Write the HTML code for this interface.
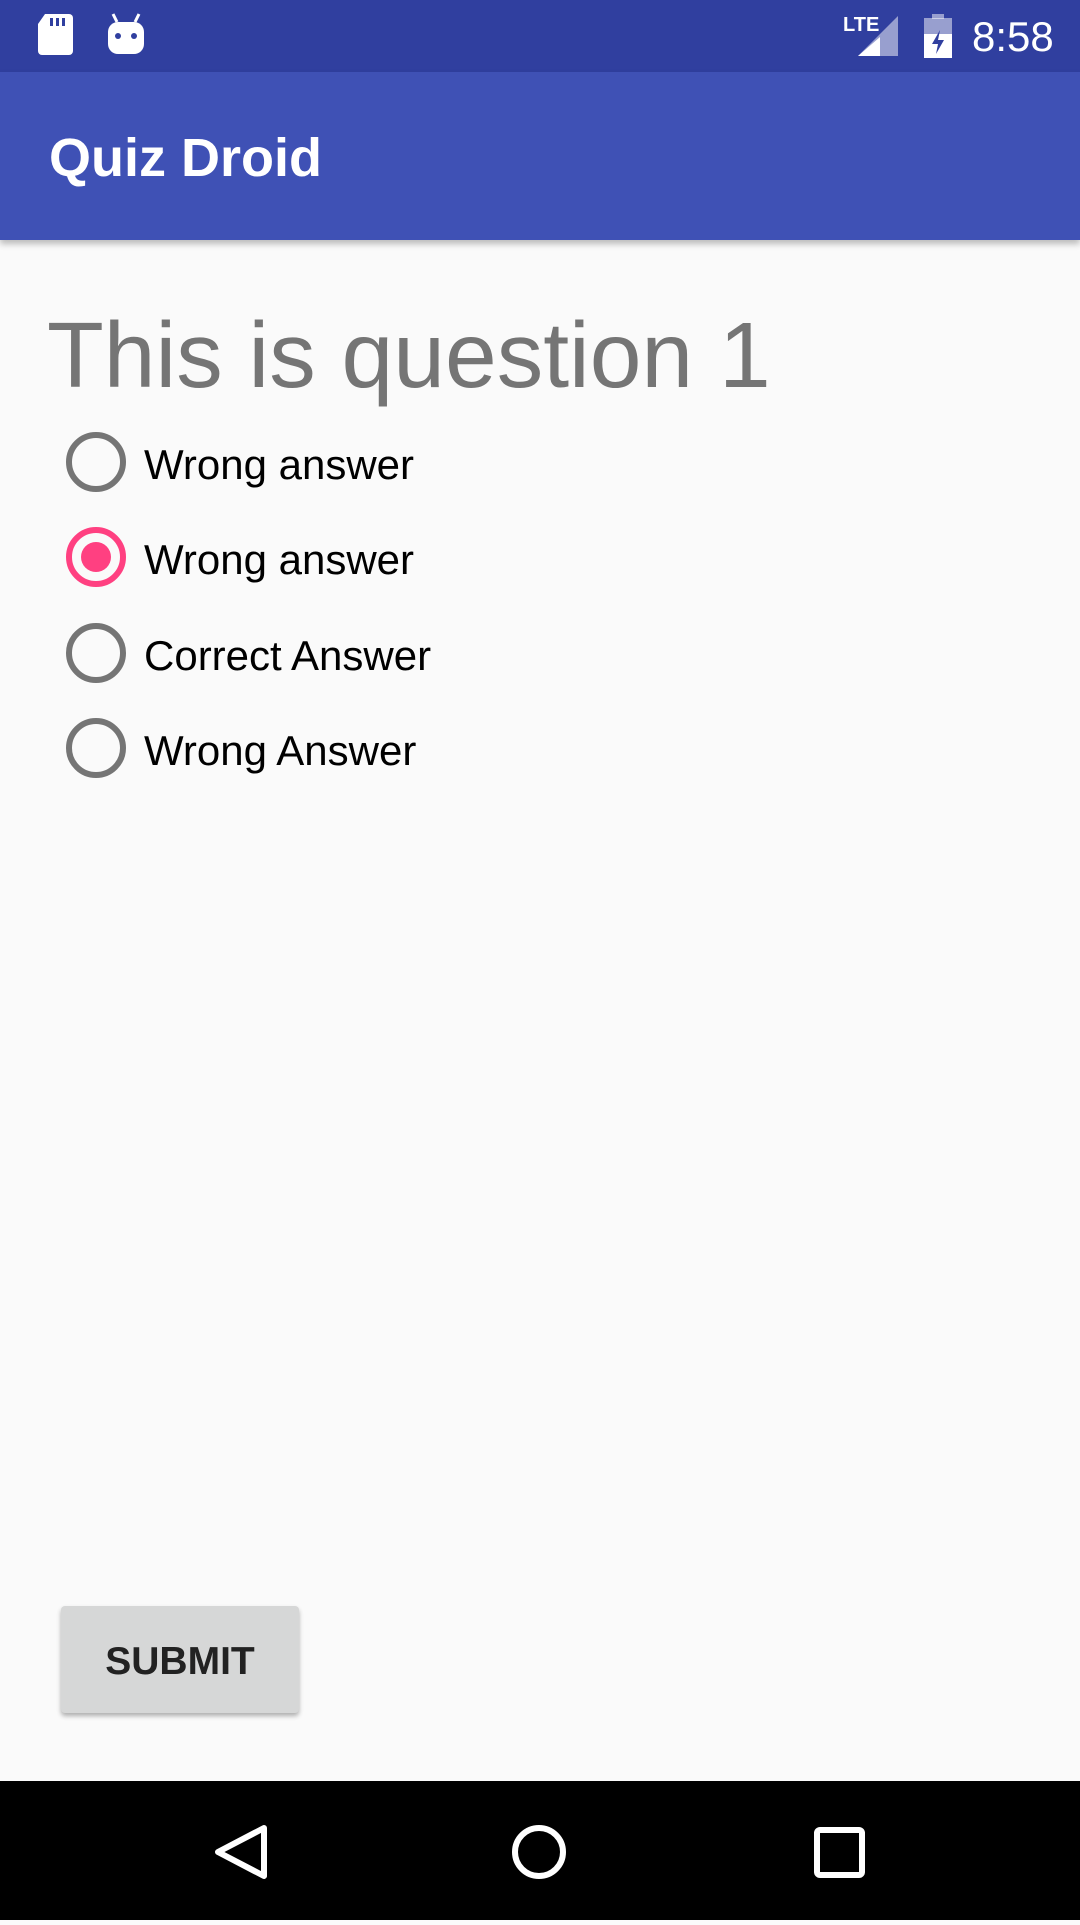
<!DOCTYPE html>
<html><head><meta charset="utf-8"><style>
*{margin:0;padding:0;box-sizing:border-box}
body{width:1080px;height:1920px;background:#FAFAFA;font-family:"Liberation Sans",sans-serif;position:relative;overflow:hidden}
.sb{position:absolute;left:0;top:0;width:1080px;height:72px;background:#303F9F}
.ab{position:absolute;left:0;top:72px;width:1080px;height:168px;background:#3F51B5;box-shadow:0 4px 6px rgba(0,0,0,.25)}
.ab span{position:absolute;left:49px;top:56px;color:#fff;font-size:54px;font-weight:bold;line-height:60px}
.q{position:absolute;left:47px;top:300px;font-size:93px;color:#757575;line-height:110px}
.r{position:absolute;left:66px;width:60px;height:60px;border:6px solid #757575;border-radius:50%}
.r.on{border-color:#FF4081}
.r.on::after{content:"";position:absolute;left:9px;top:9px;width:30px;height:30px;border-radius:50%;background:#FF4081}
.t{position:absolute;left:144px;font-size:42px;color:#000;line-height:60px;margin-top:3px}
.btn{position:absolute;left:61px;top:1606px;width:238px;height:107px;background:#D6D7D7;border-radius:4px;box-shadow:0 3px 5px rgba(0,0,0,.3);text-align:center;line-height:111px;font-size:39px;font-weight:bold;color:#222}
.nav{position:absolute;left:0;top:1781px;width:1080px;height:139px;background:#000}
.time{position:absolute;left:972px;top:14px;color:#fff;font-size:42px;line-height:46px}
</style></head><body>
<div class="sb">
<svg width="1080" height="72" style="position:absolute;left:0;top:0">
<path d="M45 14h24a4 4 0 0 1 4 4v33a4 4 0 0 1-4 4H42a4 4 0 0 1-4-4V24z" fill="#fff"/>
<rect x="50" y="18" width="3" height="8" fill="#303F9F"/><rect x="56" y="18" width="3" height="8" fill="#303F9F"/><rect x="62" y="18" width="3" height="8" fill="#303F9F"/>
<rect x="108" y="22" width="36" height="32" rx="10" fill="#fff"/>
<line x1="113" y1="14" x2="117" y2="22" stroke="#fff" stroke-width="3"/><line x1="139" y1="14" x2="135" y2="22" stroke="#fff" stroke-width="3"/>
<circle cx="118" cy="36" r="3" fill="#303F9F"/><circle cx="134" cy="36" r="3" fill="#303F9F"/>
<text x="843" y="31" fill="#fff" font-size="20" font-weight="bold" font-family="Liberation Sans">LTE</text>
<path d="M898 16v40h-40z" fill="#fff" opacity=".5"/><path d="M880 37v19h-22z" fill="#fff"/>
<rect x="924" y="18" width="28" height="40" fill="#fff" opacity=".5"/><rect x="932" y="14" width="12" height="5" fill="#fff" opacity=".5"/>
<path d="M924 34h28v24h-28z" fill="#fff"/><path d="M940 30l-8 14h6l-2 10 8-14h-6z" fill="#303F9F"/>
</svg>
<div class="time">8:58</div>
</div>
<div class="ab"><span>Quiz Droid</span></div>
<div class="q">This is question 1</div>
<div class="r" style="top:432px"></div><div class="t" style="top:432px">Wrong answer</div>
<div class="r on" style="top:527px"></div><div class="t" style="top:527px">Wrong answer</div>
<div class="r" style="top:623px"></div><div class="t" style="top:623px">Correct Answer</div>
<div class="r" style="top:718px"></div><div class="t" style="top:718px">Wrong Answer</div>
<div class="btn">SUBMIT</div>
<div class="nav">
<svg width="1080" height="139">
<path d="M264 47L218 71L264 95Z" fill="none" stroke="#fff" stroke-width="6" stroke-linejoin="round"/>
<circle cx="539" cy="71" r="24" fill="none" stroke="#fff" stroke-width="6"/>
<rect x="817" y="49" width="45" height="45" rx="3" fill="none" stroke="#fff" stroke-width="6"/>
</svg>
</div>
</body></html>
